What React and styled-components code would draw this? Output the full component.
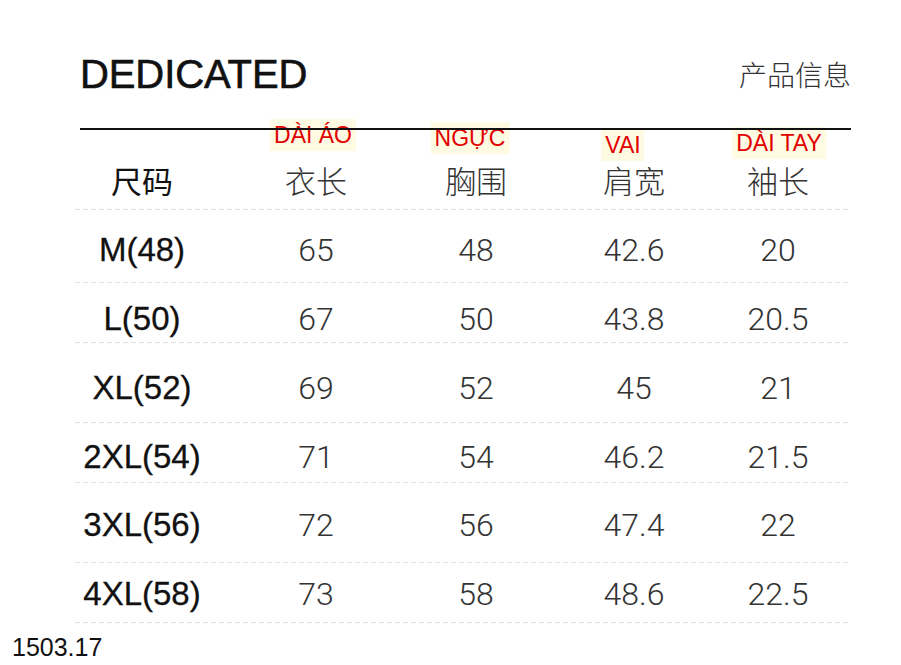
import React from 'react';
import styled, { createGlobalStyle } from 'styled-components';

const GlobalStyle = createGlobalStyle`
  html, body {
    margin: 0;
    padding: 0;
    background: #fff;
  }
  body {
    font-family: Roboto, "Noto Sans CJK SC", sans-serif;
  }
`

const Page = styled.div`
  width: 901px;
  height: 665px;
  background: #fff;
  box-sizing: border-box;
  padding-top: 48px;
  overflow: hidden;
`

const Sheet = styled.div`
  margin: 0 50px 0 80px;
`

const TopBar = styled.div`
  display: flex;
  justify-content: space-between;
  align-items: center;
  height: 52px;
`

const Brand = styled.div`
  font-family: "Liberation Sans", Arial, sans-serif;
  font-weight: 400;
  font-size: 40px;
  letter-spacing: -0.1px;
  -webkit-text-stroke: 0.6px #111;
  color: #111;
  line-height: 52px;
`

const Info = styled.div`
  font-family: "Noto Sans CJK SC", sans-serif;
  font-weight: 300;
  font-size: 28px;
  color: #333;
  line-height: 40px;
`

const Rule = styled.div`
  position: relative;
  z-index: 1;
  margin-top: 28px;
  height: 1.5px;
  background: #111;
`

const Row = styled.div`
  display: grid;
  grid-template-columns: 124px 224px 96px 220px 68px;
  height: ${p => p.$h}px;
  align-items: ${p => (p.$head ? 'end' : 'center')};
  padding-top: ${p => p.$pt || 0}px;
  padding-bottom: ${p => (p.$head ? 10 : 0)}px;
  box-sizing: border-box;
  margin-left: -5px;
  padding-left: 5px;
  background-image: linear-gradient(to right, #e0e0e0 60%, transparent 60%);
  background-size: 8px 1px;
  background-repeat: repeat-x;
  background-position: left bottom;
`

const Cell = styled.div`
  position: relative;
  display: flex;
  justify-content: center;
  white-space: nowrap;
  font-family: Roboto, sans-serif;
  font-size: 32px;
  font-weight: 300;
  color: #333;
  line-height: 40px;
`

const SizeCell = styled(Cell)`
  font-family: "Liberation Sans", Arial, sans-serif;
  font-size: 33px;
  font-weight: 400;
  color: #111;
  -webkit-text-stroke: 0.3px #111;
`

const HeadCell = styled(Cell)`
  font-family: "Noto Sans CJK SC", sans-serif;
  font-size: 31px;
  font-weight: ${p => (p.$strong ? 400 : 300)};
  color: ${p => (p.$strong ? '#111' : '#333')};
`

const Tag = styled.span`
  position: absolute;
  left: 50%;
  top: ${p => p.$top}px;
  transform: translateX(calc(-50% + ${p => p.$dx}px));
  padding: 3px 4px;
  background: #fffbe3;
  color: #e10000;
  font-family: "Liberation Sans", Arial, sans-serif;
  font-size: 23px;
  font-weight: 400;
  line-height: 26px;
  white-space: nowrap;
`

const Footer = styled.div`
  padding-left: 12px;
  margin-top: 10px;
  font-family: "Liberation Sans", Arial, sans-serif;
  font-size: 25px;
  line-height: 28px;
  color: #111;
`

const heads = [
  { zh: '尺码' },
  { zh: '衣长', tag: 'DÀI ÁO', top: -41, dx: -3 },
  { zh: '胸围', tag: 'NGỰC', top: -38, dx: -6 },
  { zh: '肩宽', tag: 'VAI', top: -31, dx: -11 },
  { zh: '袖长', tag: 'DÀI TAY', top: -33, dx: 1 },
]

const rows = [
  { h: 73, pt: 7, cells: ['M(48)', '65', '48', '42.6', '20'] },
  { h: 60, pt: 12, cells: ['L(50)', '67', '50', '43.8', '20.5'] },
  { h: 80, pt: 10, cells: ['XL(52)', '69', '52', '45', '21'] },
  { h: 60, pt: 8, cells: ['2XL(54)', '71', '54', '46.2', '21.5'] },
  { h: 80, pt: 4, cells: ['3XL(56)', '72', '56', '47.4', '22'] },
  { h: 60, pt: 2, cells: ['4XL(58)', '73', '58', '48.6', '22.5'] },
]

export default function App() {
  return (
    <Page>
      <GlobalStyle />
      <Sheet>
        <TopBar>
          <Brand>DEDICATED</Brand>
          <Info>产品信息</Info>
        </TopBar>
        <Rule />
        <Row $head $h={80}>
          {heads.map((h, i) => (
            <HeadCell key={i} $strong={i === 0}>
              {h.tag && <Tag $top={h.top} $dx={h.dx}>{h.tag}</Tag>}
              {h.zh}
            </HeadCell>
          ))}
        </Row>
        {rows.map((r) => (
          <Row key={r.cells[0]} $h={r.h} $pt={r.pt}>
            <SizeCell>{r.cells[0]}</SizeCell>
            {r.cells.slice(1).map((v, i) => (
              <Cell key={i}>{v}</Cell>
            ))}
          </Row>
        ))}
      </Sheet>
      <Footer>1503.17</Footer>
    </Page>
  );
}
